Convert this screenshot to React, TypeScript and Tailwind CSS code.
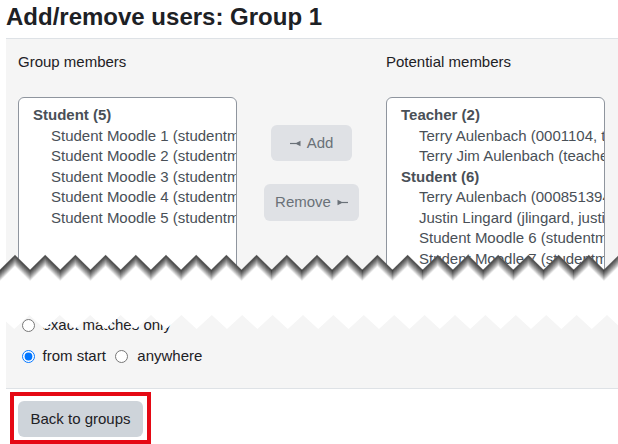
import React from 'react'

const leftMembers = [
  'Student Moodle 1 (studentmo',
  'Student Moodle 2 (studentmo',
  'Student Moodle 3 (studentmo',
  'Student Moodle 4 (studentmo',
  'Student Moodle 5 (studentmo',
]

const teachers = ['Terry Aulenbach (0001104, te', 'Terry Jim Aulenbach (teache']

const students = [
  'Terry Aulenbach (000851394',
  'Justin Lingard (jlingard, justi',
  'Student Moodle 6 (studentmo',
  'Student Moodle 7 (studentmo',
]

// zigzag points across the page width
const zigzag = (start: number, period: number, top: number, bottom: number) => {
  const pts: string[] = []
  for (let x = start - period * 2; x < 660; x += period) {
    pts.push(`${x.toFixed(1)},${top}`)
    pts.push(`${(x + period / 2).toFixed(1)},${bottom}`)
  }
  return pts.join(' L ')
}

const shadowSteps = [0, 1, 2, 3, 4, 5, 6, 7, 8, 9, 10]

const TornBottom = () => {
  const edge = zigzag(15, 30.2, 5, 20)
  const below = `M -40,60 L ${edge} L 680,60 Z`
  return (
    <svg className="absolute bottom-0 left-0 h-[32px] w-[618px]" viewBox="0 0 618 32">
      <path d={below} fill="#ffffff" />
      {/* soft shadow under the torn edge */}
      {shadowSteps.map(i => (
        <path
          key={i}
          d={`M ${edge}`}
          transform={`translate(0,${i + 0.5})`}
          fill="none"
          stroke="#000000"
          strokeWidth="1.2"
          strokeOpacity={0.58 * (1 - i / 11)}
        />
      ))}
    </svg>
  )
}

const TornTop = () => {
  const edge = zigzag(-1, 30.4, 0, 14)
  return (
    <svg className="absolute left-[-6px] top-0 h-[15px] w-[618px]" viewBox="0 0 618 15">
      <path d={`M -40,-5 L ${edge} L 680,-5 Z`} fill="#ffffff" />
    </svg>
  )
}

const AddArrow = () => (
  <svg width="11" height="7" viewBox="0 0 11 7" className="mr-[6px]">
    <line x1="0" y1="3.5" x2="6" y2="3.5" stroke="#6a7178" strokeWidth="1.2" />
    <polygon points="5,3.5 10.5,0.8 10.5,6.2" fill="#6a7178" />
  </svg>
)

const RemoveArrow = () => (
  <svg width="11" height="7" viewBox="0 0 11 7" className="ml-[6px]">
    <polygon points="0.5,0.8 0.5,6.2 6,3.5" fill="#6a7178" />
    <line x1="5" y1="3.5" x2="11" y2="3.5" stroke="#6a7178" strokeWidth="1.2" />
  </svg>
)

const UserList = ({ groups }: { groups: { label: string; items: string[] }[] }) => (
  <div className="mt-6 h-[200px] overflow-hidden whitespace-nowrap rounded-md border border-[#8f959e] bg-white pt-[7px] pl-[14px] text-[15px] leading-[20.5px] text-[#495057]">
    {groups.map(g => (
      <div key={g.label}>
        <div className="font-bold">{g.label}</div>
        {g.items.map(i => (
          <div key={i} className="overflow-hidden pl-[18px]">{i}</div>
        ))}
      </div>
    ))}
  </div>
)

export default function App() {
  return (
    <div className="h-[444px] w-[618px] overflow-hidden bg-white font-['Liberation_Sans',Arial,sans-serif] text-[#1d2125]">
      <div className="h-[38px] pl-[6px] pt-[2px]">
        <h2 className="text-[24px] font-bold leading-[29px]">Add/remove users: Group 1</h2>
      </div>

      <div className="relative h-[244px]">
        <div className="ml-[6px] h-full overflow-hidden border-t border-[#dee2e6] bg-[#f5f5f5] pl-3 pt-3">
          <div className="grid grid-cols-[219px_149px_219px]">
            <div>
              <div className="text-[15px] leading-[22px]">Group members</div>
              <UserList groups={[{ label: 'Student (5)', items: leftMembers }]} />
            </div>
            <div className="flex flex-col items-center pt-[74px]">
              <button className="flex h-[36px] w-[81px] items-center justify-center rounded-md bg-[#dfe1e5] text-[15px] text-[#6a7178]">
                <AddArrow />
                Add
              </button>
              <button className="mt-[23px] flex h-[37px] w-[95px] items-center justify-center rounded-md bg-[#dfe1e5] text-[15px] text-[#6a7178]">
                Remove
                <RemoveArrow />
              </button>
            </div>
            <div>
              <div className="text-[15px] leading-[22px]">Potential members</div>
              <UserList
                groups={[
                  { label: 'Teacher (2)', items: teachers },
                  { label: 'Student (6)', items: students },
                ]}
              />
            </div>
          </div>
        </div>
        <TornBottom />
      </div>

      <div className="relative mt-[33px] ml-[6px] h-[74px] border-b border-[#dee2e6] bg-[#f5f5f5] pl-4 text-[15px]">
        <label className="flex h-[21px] items-center">
          <input type="radio" name="match" className="m-0 ml-[-0.5px] h-[13px] w-[13px]" />
          <span className="ml-2">exact matches only</span>
        </label>
        <div className="mt-[9.5px] flex h-[21px] items-center">
          <input type="radio" name="search" defaultChecked className="m-0 ml-[-0.5px] h-[13px] w-[13px]" />
          <span className="ml-2">from start</span>
          <input type="radio" name="search" className="m-0 ml-[9px] h-[13px] w-[13px]" />
          <span className="ml-[9.5px]">anywhere</span>
        </div>
        <TornTop />
      </div>

      <div className="pl-[18px] pt-3">
        <div className="relative inline-block">
          <button className="h-[36px] w-[125px] rounded-md bg-[#ced4da] text-[15px] text-[#1d2125]">
            Back to groups
          </button>
          <div className="pointer-events-none absolute -bottom-[7px] -left-2 -right-2 -top-[9px] border-4 border-[#e50914]" />
        </div>
      </div>
    </div>
  )
}
